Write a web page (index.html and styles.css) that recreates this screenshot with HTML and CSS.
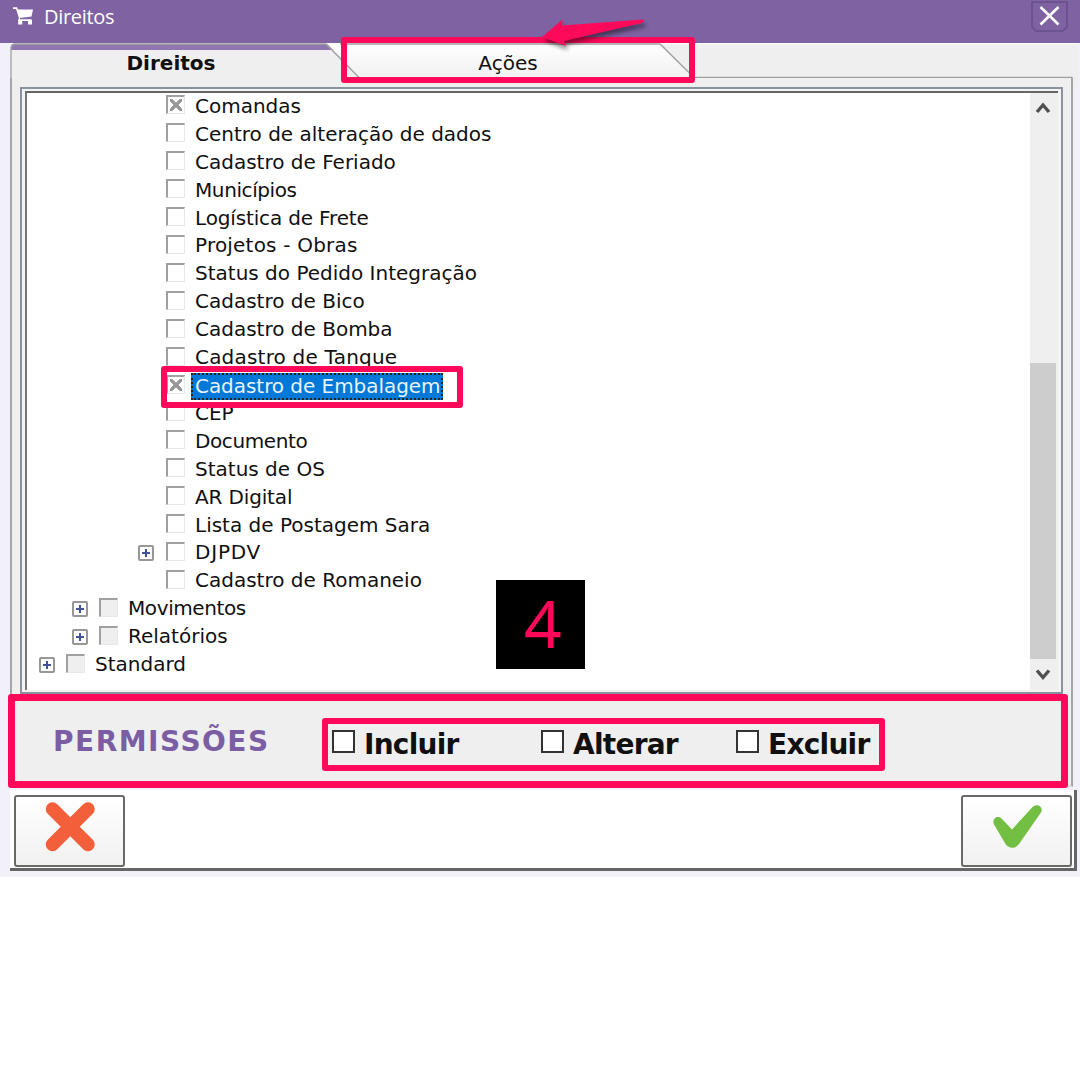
FILE: index.html
```html
<!DOCTYPE html>
<html lang="pt-BR">
<head>
<meta charset="utf-8">
<title>Direitos</title>
<link rel="stylesheet" href="styles.css">
</head>
<body>
<main class="window">
  <header class="titlebar">
    <svg class="cart" width="21" height="20" viewBox="0 0 21 20"><path d="M0 1.200H4L5 3.500H20L18.500 10.500L7 12V13.200H18.500V15H5.200L5.800 11.500L3 3H0Z" fill="#fff"/><rect x="5.200" y="14" width="4" height="4.500" fill="#fff"/><rect x="15" y="14" width="4" height="4.500" fill="#fff"/></svg>
    <h1 class="title">Direitos</h1>
    <button class="close" aria-label="Fechar"><svg width="37" height="31" viewBox="0 0 37 31"><path d="M1 1H36V26L32 30H5L1 26Z" fill="none" stroke="#67508a" stroke-width="1.600"/><path d="M9.500 6L27.500 23.500M27.500 6L9.500 23.500" stroke="#fff" stroke-width="2.600"/></svg></button>
  </header>

  <nav class="tabs">
    <svg class="tab-shape" width="1068" height="44" viewBox="0 0 1068 44">
      <defs><linearGradient id="tab" x1="0" y1="0" x2="0" y2="1"><stop offset="0" stop-color="#fff"/><stop offset="1" stop-color="#f1f1f1"/></linearGradient></defs>
      <rect width="1068" height="44" fill="#efefef"/>
      <rect y="0" width="1068" height="1.500" fill="#fafafa"/>
      <path d="M318 1H650L684 34.500H350Z" fill="url(#tab)"/>
      <path d="M2 1H317L323 7H1V3Z" fill="#9076b0"/>
      <path d="M1 44V4L4 1H316L349 34.500M330 1H650L684 34.500H1062V44" fill="none" stroke="#a0a0a0" stroke-width="1.300"/>
    </svg>
    <span class="tab tab-active">Direitos</span>
    <span class="tab">Ações</span>
  </nav>

  <section class="pane">
    <div class="tree-frame">
      <ul class="tree">
        <li class="row"><i class="box checked"></i><span>Comandas</span></li>
        <li class="row"><i class="box"></i><span>Centro de alteração de dados</span></li>
        <li class="row"><i class="box"></i><span>Cadastro de Feriado</span></li>
        <li class="row"><i class="box"></i><span class="narrow">Municípios</span></li>
        <li class="row"><i class="box"></i><span class="snug">Logística de Frete</span></li>
        <li class="row"><i class="box"></i><span class="wide">Projetos - Obras</span></li>
        <li class="row"><i class="box"></i><span>Status do Pedido Integração</span></li>
        <li class="row"><i class="box"></i><span>Cadastro de Bico</span></li>
        <li class="row"><i class="box"></i><span>Cadastro de Bomba</span></li>
        <li class="row"><i class="box"></i><span class="wide">Cadastro de Tanque</span></li>
        <li class="row"><i class="box checked"></i><span class="selected">Cadastro de Embalagem</span></li>
        <li class="row"><i class="box"></i><span>CEP</span></li>
        <li class="row"><i class="box"></i><span class="narrow">Documento</span></li>
        <li class="row"><i class="box"></i><span>Status de OS</span></li>
        <li class="row"><i class="box"></i><span class="snug">AR Digital</span></li>
        <li class="row"><i class="box"></i><span>Lista de Postagem Sara</span></li>
        <li class="row expandable"><i class="plus"></i><i class="box"></i><span class="wider">DJPDV</span></li>
        <li class="row"><i class="box"></i><span>Cadastro de Romaneio</span></li>
        <li class="row expandable level-2"><i class="plus"></i><i class="box grey"></i><span class="narrow">Movimentos</span></li>
        <li class="row expandable level-2"><i class="plus"></i><i class="box grey"></i><span>Relatórios</span></li>
        <li class="row expandable level-1"><i class="plus"></i><i class="box grey"></i><span>Standard</span></li>
      </ul>
      <div class="scrollbar">
        <svg width="26" height="30" viewBox="0 0 26 30"><path d="M7 19L13 12L19 19" fill="none" stroke="#505050" stroke-width="3.400"/></svg>
        <div class="thumb"></div>
        <svg width="26" height="31" viewBox="0 0 26 31"><path d="M7 11.500L13 18.500L19 11.500" fill="none" stroke="#505050" stroke-width="3.400"/></svg>
      </div>
    </div>

    <div class="permissions">
      <h2 class="heading">PERMISSÕES</h2>
      <div class="options">
        <label class="option"><i class="check"></i>Incluir</label>
        <label class="option"><i class="check"></i>Alterar</label>
        <label class="option"><i class="check"></i>Excluir</label>
      </div>
    </div>
  </section>

  <footer class="actions">
    <button class="action" aria-label="Cancelar"><svg width="50" height="50" viewBox="0 0 50 50"><path d="M7.500 7L43 42.500M43 7L7.500 42.500" stroke="#f25f3a" stroke-width="13.500" stroke-linecap="round"/></svg></button>
    <button class="action" aria-label="Confirmar"><svg width="50" height="50" viewBox="0 0 50 50"><path d="M2 22.500C-.5 17 5 12.500 9.500 16.500L20 27.500L40.500 5C45 .5 52 5 49 10.500L27 42C23.500 47 17 47 13.500 42Z" fill="#72bf44"/></svg></button>
  </footer>

  <div class="mark mark-tab"></div>
  <div class="mark mark-row"></div>
  <div class="mark mark-permissions"></div>
  <div class="mark mark-options"></div>
  <svg class="arrow" width="110" height="40" viewBox="0 0 110 40"><path d="M2 22L22.500 4.500L22 10.500L103 4.500Q105 6 102 8L24 26L26 31Z" fill="#ff0a5a"/></svg>
  <div class="step">4</div>
</main>
</body>
</html>
```

FILE: styles.css
```css
* { box-sizing: border-box; }

body {
  margin: 0;
  background: #fff;
  color: #101010;
  font-family: "DejaVu Sans", Verdana, sans-serif;
}

.window {
  position: relative;
  display: flex;
  flex-direction: column;
  width: 1080px;
  height: 877px;
  background: #f2f0f8;
}

svg { display: block; flex: none; }

button { padding: 0; border: 0; background: none; }

.titlebar {
  display: flex;
  align-items: flex-start;
  height: 43px;
  padding: 1px 12px 0 13px;
  background: #7e62a1;
}

.cart { margin-top: 5px; }

.title {
  margin: 2px auto 0 10px;
  color: #fff;
  font: 400 20px/28px "Open Sans", "Noto Sans", sans-serif;
  letter-spacing: -0.3px;
}

.tabs {
  position: relative;
  display: flex;
  height: 35px;
  margin-left: 10px;
}

.tab-shape { position: absolute; left: 0; top: 0; }

.tab {
  position: relative;
  width: 322px;
  font-size: 20px;
  line-height: 40px;
  text-align: center;
}

.tab + .tab { width: 352px; }

.tab-active { font-weight: 700; }

.pane {
  display: flex;
  flex-direction: column;
  flex: none;
  width: 1063px;
  height: 709px;
  margin-left: 10px;
  padding: 9px 8px 0;
  border: 2px solid #a5a5a5;
  border-top: 0;
  border-bottom-color: #d8d8d8;
  background: #efefef;
  position: relative;
}

.tree-frame {
  display: flex;
  flex: none;
  justify-content: space-between;
  width: 1043px;
  height: 607px;
  padding: 2px 3px;
  border: 2px solid #8a929e;
  background: #f3f3f3;
}

.tree {
  flex: 1;
  margin: 0;
  padding: 0;
  border-top: 2px solid #666;
  border-left: 2px solid #777;
  background: #fff;
  list-style: none;
}

.row {
  display: flex;
  align-items: center;
  height: 27.92px;
  padding: 0 0 2px 139px;
  font-size: 20px;
  line-height: 26px;
  white-space: nowrap;
}

.row span { margin-left: 10px; }
.row .narrow { letter-spacing: -0.4px; }
.row .snug { letter-spacing: -0.15px; }
.row .wide { letter-spacing: 0.2px; }
.row .wider { letter-spacing: 0.8px; }

.row.expandable { padding-left: 111px; }
.row.level-2 { padding-left: 45px; }
.row.level-1 { padding-left: 12px; }

.box {
  display: grid;
  place-items: center;
  width: 19px;
  height: 19px;
  margin-top: -2px;
  border: 1px solid #e8e8e8;
  border-top: 2px solid #a0a0a0;
  border-left: 2px solid #a0a0a0;
  background: #fff;
}

.grey { background: #efefef; }

.checked::before {
  content: "";
  width: 12px;
  height: 12px;
  background:
    linear-gradient(45deg, transparent 40%, #969696 42% 58%, transparent 60%),
    linear-gradient(-45deg, transparent 40%, #969696 42% 58%, transparent 60%);
}

.plus {
  width: 16px;
  height: 16px;
  margin: 2px 11px 0 0;
  border: 2px solid #979797;
  border-radius: 2px;
  background:
    linear-gradient(#3f549b, #3f549b) center / 8px 2px no-repeat,
    linear-gradient(#3f549b, #3f549b) center / 2px 8px no-repeat,
    #fff;
}

.expandable:not(.level-2):not(.level-1) .plus { margin-right: 12px; }

.row .selected {
  margin: 2px 0 0 6px;
  padding: 0 1px 0 2px;
  border: 2px dotted #332211;
  background: #0078d7;
  color: #e8f3ff;
  line-height: 23px;
  letter-spacing: -0.05px;
}

.scrollbar {
  display: flex;
  flex-direction: column;
  width: 28px;
  border-top: 2px solid #666;
  background: #efefef;
}

.thumb {
  width: 26px;
  height: 296px;
  margin-top: auto;
  background: #cdcdcd;
}

.permissions {
  display: flex;
  align-items: center;
  height: 94px;
  padding: 4px 0 0 33px;
}

.heading {
  width: 279px;
  margin: 0;
  color: #7a5da3;
  font-size: 28px;
  line-height: 34px;
  letter-spacing: 1.5px;
}

.options { display: flex; padding-top: 7px; }

.option {
  display: flex;
  align-items: center;
  width: 209px;
  font-size: 28px;
  font-weight: 700;
  line-height: 34px;
  letter-spacing: -0.75px;
}

.option:nth-child(2) { width: 195px; }

.check {
  width: 23px;
  height: 23px;
  margin: -7px 9px 0 0;
  border: 2px solid #333;
  background: #fff;
}

.actions {
  display: flex;
  justify-content: space-between;
  width: 1067px;
  height: 81px;
  margin: 3px 0 0 10px;
  padding: 5px 2px 0 4px;
  border-right: 3px solid #666;
  border-bottom: 3px solid #666;
  background: #fff;
}

.action {
  display: grid;
  place-items: center;
  width: 111px;
  height: 72px;
  padding: 0 0 8px 1px;
  border: 2px solid #696969;
  border-radius: 3px;
  background: linear-gradient(#fff, #f1f1f1);
}

.mark {
  position: absolute;
  border: 6px solid #ff0a5a;
  border-radius: 3px;
}

.mark-tab { left: 341px; top: 37px; width: 354px; height: 46px; }
.mark-row { left: 161px; top: 366px; width: 302px; height: 42px; }
.mark-permissions { left: 8px; top: 694px; width: 1060px; height: 94px; border-width: 7px; }
.mark-options { left: 322px; top: 718px; width: 563px; height: 53px; }

.arrow {
  position: absolute;
  left: 540px;
  top: 15px;
  filter: drop-shadow(2px 4px 2px rgb(0 0 0 / 45%));
}

.step {
  position: absolute;
  left: 496px;
  top: 580px;
  width: 89px;
  height: 89px;
  padding-left: 5px;
  background: #000;
  color: #ff0a5a;
  font: 66px/84px "Noto Sans", "Open Sans", sans-serif;
  text-align: center;
}
```
